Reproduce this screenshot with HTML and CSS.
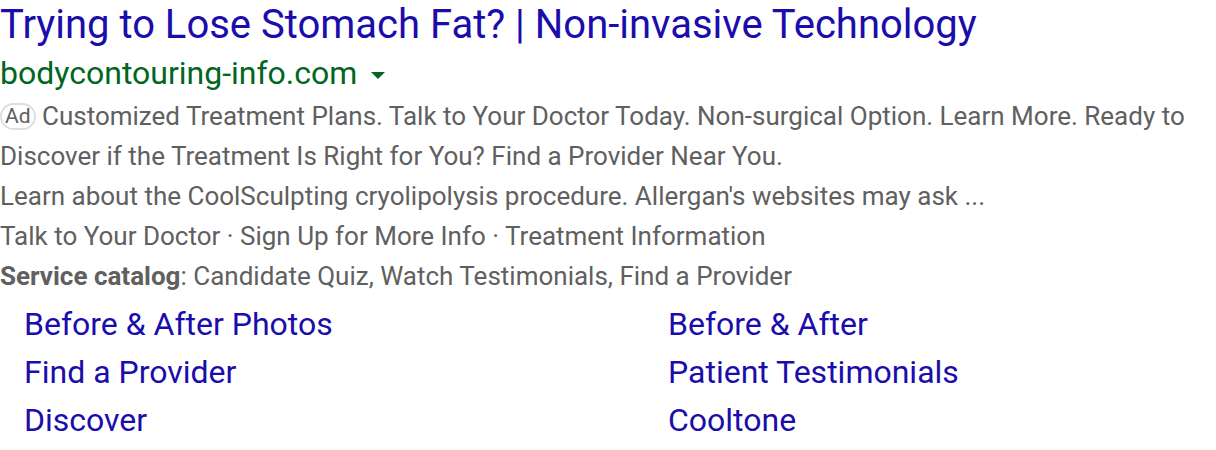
FILE: index.html
```html
<!DOCTYPE html>
<html>
<head>
<meta charset="utf-8">
<link rel="stylesheet" href="styles.css">
</head>
<body>
<div class="ad">
  <h3 class="title">Trying to Lose Stomach Fat? | Non-invasive Technology</h3>
  <div class="url-row">
    <span class="url">bodycontouring-info.com</span>
    <span class="caret"></span>
  </div>
  <div class="desc">
    <span class="badge">Ad</span> Customized Treatment Plans. Talk to Your Doctor Today. Non-surgical Option. Learn More. Ready to Discover if the Treatment Is Right for You? Find a Provider Near You.
  </div>
  <div class="desc">Learn about the CoolSculpting cryolipolysis procedure. Allergan's websites may ask ...</div>
  <div class="desc">Talk to Your Doctor · Sign Up for More Info · Treatment Information</div>
  <div class="desc"><b>Service catalog</b>: Candidate Quiz, Watch Testimonials, Find a Provider</div>
  <div class="sitelinks">
    <a>Before &amp; After Photos</a>
    <a>Before &amp; After</a>
    <a>Find a Provider</a>
    <a>Patient Testimonials</a>
    <a>Discover</a>
    <a>Cooltone</a>
  </div>
</div>
</body>
</html>
```

FILE: styles.css
```css
html, body {
  margin: 0;
  padding: 0;
  background: #fff;
}
body {
  font-family: Roboto, "Liberation Sans", Arial, sans-serif;
}
.title {
  margin: 0;
  font-weight: 400;
  font-size: 40px;
  line-height: 50px;
  color: #1a0dab;
  white-space: nowrap;
}
.url-row {
  display: flex;
  align-items: center;
  height: 46px;
}
.url {
  font-size: 32px;
  color: #006621;
}
.caret {
  margin-left: 14px;
  margin-top: 4px;
  width: 0;
  height: 0;
  border-left: 7px solid transparent;
  border-right: 7px solid transparent;
  border-top: 7px solid #006621;
}
.desc {
  font-size: 26px;
  line-height: 40px;
  color: #606060;
}
.desc b {
  font-weight: 700;
}
.badge {
  display: inline-block;
  border: 2px solid #dedede;
  border-radius: 14px;
  padding: 0 3px;
  line-height: 23px;
  font-size: 21px;
  color: #606060;
  vertical-align: 2px;
}
.sitelinks {
  display: grid;
  grid-template-columns: 644px 1fr;
  padding-left: 24px;
  margin-top: 4px;
}
.sitelinks a {
  font-size: 32px;
  line-height: 48px;
  color: #1a0dab;
}
```
